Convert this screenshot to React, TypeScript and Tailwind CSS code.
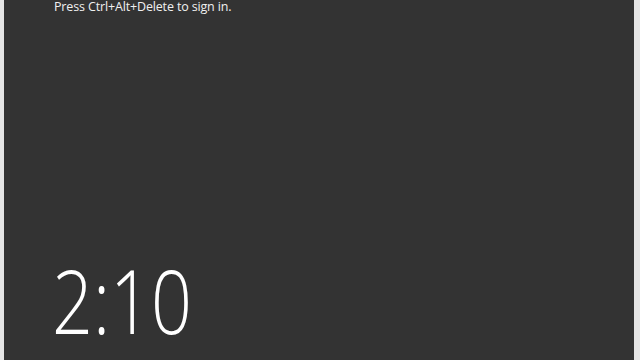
export default function App() {
  return (
    <div className="w-[640px] h-[360px] flex bg-[#f0f0f0] overflow-hidden">
      <div className="w-[4px] bg-[#e6e6e6]" />
      <div className="flex-1 bg-[#333333] flex flex-col pl-[50px] overflow-hidden" style={{ fontFamily: '"Open Sans", "Noto Sans", sans-serif' }}>
        <div className="text-[12.5px] leading-[12px] tracking-[-0.15px] text-[#f0f0f0] pt-[1px]">Press Ctrl+Alt+Delete to sign in.</div>
        <div className="flex-1" />
        <div className="ml-[-2px] text-[88px] leading-[88px] font-light text-white mb-[16px] scale-x-[0.815] origin-left">2:10</div>
      </div>
      <div className="w-[6px] bg-[#e6e6e6]" />
    </div>
  );
}
